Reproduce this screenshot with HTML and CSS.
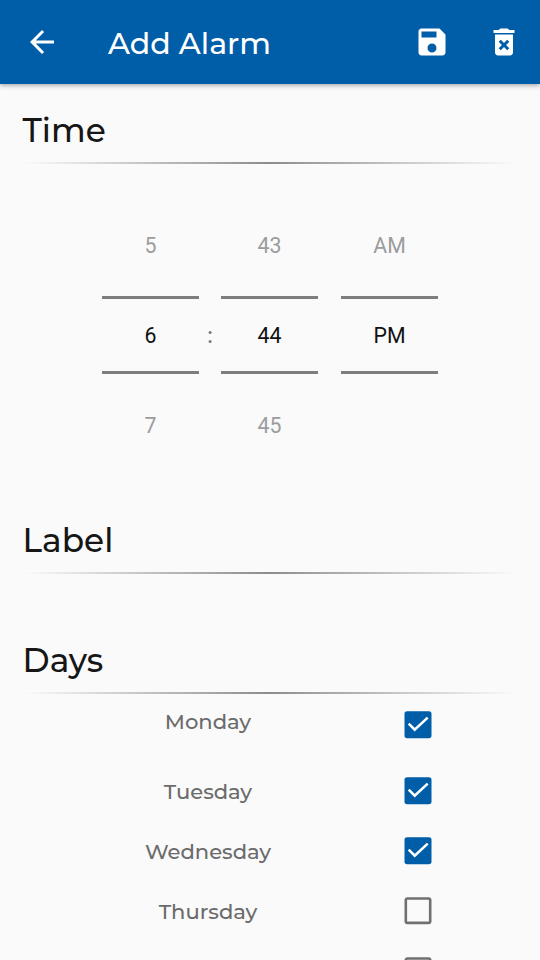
FILE: index.html
```
<!DOCTYPE html>
<html lang="en">
<head>
<meta charset="utf-8">
<title>Add Alarm</title>
<link rel="stylesheet" href="styles.css">
</head>
<body>
<header class="bar">
  <svg class="icon back" viewBox="0 0 24 24"><path d="M20 11H7.83l5.59-5.59L12 4l-8 8 8 8 1.41-1.41L7.83 13H20v-2z"/></svg>
  <h1 class="title">Add Alarm</h1>
  <svg class="icon save" viewBox="0 0 24 24"><path d="M17 3H5c-1.11 0-2 .9-2 2v14c0 1.1.89 2 2 2h14c1.1 0 2-.9 2-2V7l-4-4zm-5 16c-1.66 0-3-1.34-3-3s1.34-3 3-3 3 1.34 3 3-1.34 3-3 3zm3-10H5V5h10v4z"/></svg>
  <svg class="icon" viewBox="0 0 24 24"><path d="M6 19c0 1.1.9 2 2 2h8c1.1 0 2-.9 2-2V7H6v12zm2.46-7.12l1.41-1.41L12 12.59l2.12-2.12 1.41 1.41L13.41 14l2.12 2.12-1.41 1.41L12 15.41l-2.12 2.12-1.41-1.41L10.59 14l-2.13-2.12zM15.5 4l-1-1h-5l-1 1H5v2h14V4z"/></svg>
</header>
<main>
  <section class="time">
    <h2 class="heading">Time</h2>
    <div class="picker">
      <div class="wheel"><span class="faded">5</span><span class="current">6</span><span class="faded">7</span></div>
      <span class="colon">:</span>
      <div class="wheel"><span class="faded">43</span><span class="current">44</span><span class="faded">45</span></div>
      <div class="wheel period"><span class="faded">AM</span><span class="current">PM</span><span class="faded"></span></div>
    </div>
  </section>
  <section class="label">
    <h2 class="heading">Label</h2>
  </section>
  <section>
    <h2 class="heading">Days</h2>
    <ul class="days">
      <li class="day first"><span class="name">Monday</span><svg class="box" viewBox="0 0 28 28"><rect class="on" x=".5" y=".2" width="27" height="27" rx="2.6"/><path class="tick" d="M4.7 12.6l6 6L23.7 6.6"/></svg></li>
      <li class="day"><span class="name">Tuesday</span><svg class="box" viewBox="0 0 28 28"><rect class="on" x=".5" y=".2" width="27" height="27" rx="2.6"/><path class="tick" d="M4.7 12.6l6 6L23.7 6.6"/></svg></li>
      <li class="day"><span class="name">Wednesday</span><svg class="box" viewBox="0 0 28 28"><rect class="on" x=".5" y=".2" width="27" height="27" rx="2.6"/><path class="tick" d="M4.7 12.6l6 6L23.7 6.6"/></svg></li>
      <li class="day"><span class="name">Thursday</span><svg class="box" viewBox="0 0 28 28"><rect class="off" x="1.8" y="1.5" width="24.4" height="24.4" rx="1.6"/></svg></li>
      <li class="day"><span class="name"></span><svg class="box" viewBox="0 0 28 28"><rect class="off" x="1.8" y="1.5" width="24.4" height="24.4" rx="1.6"/></svg></li>
    </ul>
  </section>
</main>
</body>
</html>
```
FILE: styles.css
```
* { box-sizing: border-box; }
body {
  margin: 0;
  height: 960px;
  overflow: hidden;
  background: #fafafa;
  font-family: Montserrat, Inter, sans-serif;
}
h1, h2, ul { margin: 0; padding: 0; font-weight: 500; }

.bar {
  display: flex;
  align-items: center;
  height: 84px;
  padding: 0 18px 0 24px;
  background: #005da8;
  color: #fff;
  box-shadow: 0 1px 5px rgba(0, 0, 0, .4);
}
.icon { width: 36px; height: 36px; fill: currentColor; flex: none; }
.title {
  flex: 1;
  margin-left: 48px;
  font-size: 30px;
  line-height: 36px;
  padding-top: 3px;
}
.save { margin-right: 36px; }

.heading {
  height: 80px;
  padding: 26px 0 0 22.6px;
  font-size: 32.8px;
  line-height: 40px;
  color: #161616;
  background: linear-gradient(90deg, transparent, #8c8c8c 50%, transparent) 24px 78px / 490px 2px no-repeat;
}

.time { height: 410px; }
.picker {
  display: flex;
  margin: 52px 0 0 102px;
  font: 21.3px/30px Roboto, sans-serif;
}
.wheel {
  display: flex;
  flex-direction: column;
  width: 97px;
  text-align: center;
}
.period { margin-left: 23px; }
.faded { height: 80px; padding-top: 15px; color: #9c9c9c; }
.current {
  height: 78px;
  padding-top: 22px;
  border: solid #7d7d7d;
  border-width: 3px 0;
  color: #111;
}
.current + .faded { padding-top: 37px; }
.colon {
  width: 22px;
  padding-top: 105px;
  text-align: center;
  font-weight: 500;
  color: #737373;
}
.label { height: 120px; }

.days { list-style: none; }
.day {
  display: flex;
  align-items: center;
  height: 60px;
  padding-left: 108px;
}
.first { height: 67px; align-items: flex-start; padding-top: 17px; }
.name {
  width: 200px;
  padding-top: 2px;
  text-align: center;
  font-size: 21.1px;
  font-weight: 500;
  line-height: 28px;
  color: #6b6b6b;
}
.first .name { margin-top: -5px; }
.box { width: 28px; height: 28px; margin-left: 96px; }
.on { fill: #005da8; }
.off { fill: none; stroke: #707070; stroke-width: 2.6; }
.tick { fill: none; stroke: #fff; stroke-width: 2.6; }
```
